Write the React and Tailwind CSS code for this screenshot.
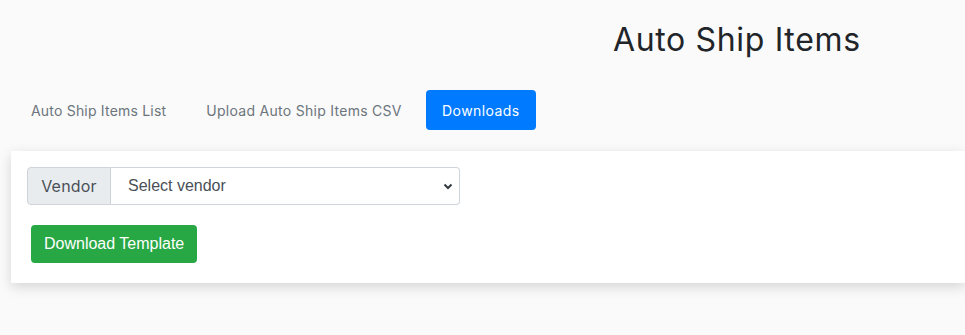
import React from "react";

export default function App() {
  return (
    <div className="w-[965px] h-[335px] bg-[#fafafa] overflow-hidden" style={{ fontFamily: "Inter, 'Open Sans', sans-serif" }}>
      <div className="pt-[16px] pl-[613px] h-[90px]">
        <h1 className="text-[32px] leading-[48px] text-[#212529] font-normal tracking-[0.65px]">Auto Ship Items</h1>
      </div>
      <div className="flex items-center pl-[15px] h-[40px] gap-[8px]">
        <div className="px-4 h-[40px] flex items-center text-[14px] text-[#6c757d] tracking-[0.2px]">Auto Ship Items List</div>
        <div className="px-4 h-[40px] flex items-center text-[14px] text-[#6c757d] tracking-[0.28px]">Upload Auto Ship Items CSV</div>
        <div className="px-4 h-[40px] w-[110px] justify-center flex items-center text-[14px] text-white bg-[#007bff] rounded-[4px] tracking-[0.4px]">Downloads</div>
      </div>
      <div className="mt-[21px] ml-[11px] bg-white shadow-[0_4px_12px_rgba(0,0,0,0.15)] p-4 pb-4">
        <div className="flex w-[433px] h-[38px]">
          <div className="w-[84px] flex items-center justify-center bg-[#e9ecef] border border-[#ced4da] rounded-l-[4px] text-[16px] text-[#495057] tracking-[0.2px]">Vendor</div>
          <div className="flex-1 relative border border-l-0 border-[#ced4da] rounded-r-[4px] bg-white flex items-center pl-[17px] text-[16px] text-[#495057]" style={{ fontFamily: "'Liberation Sans', Arial, sans-serif" }}>
            Select vendor
            <svg className="absolute right-[6px] top-[15px]" width="10" height="7" viewBox="0 0 10 7">
              <path d="M1.5 1.5 L5 5 L8.5 1.5" fill="none" stroke="#343a40" strokeWidth="2" />
            </svg>
          </div>
        </div>
        <div className="mt-[16px]">
          <button className="m-1 h-[38px] px-[13px] bg-[#28a745] text-white rounded-[4px] text-[16px]" style={{ fontFamily: "'Liberation Sans', Arial, sans-serif" }}>Download Template</button>
        </div>
      </div>
    </div>
  );
}
